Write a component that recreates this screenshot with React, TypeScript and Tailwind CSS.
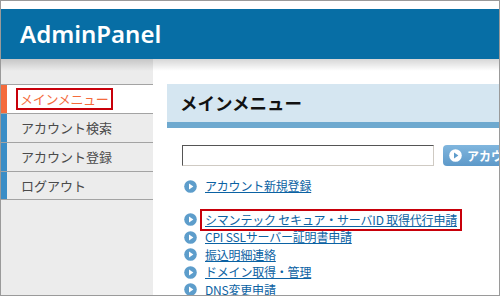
import React from "react";

const jp = { fontFamily: '"Noto Sans CJK JP", "Noto Sans", sans-serif' };

function PlayIcon({ light = false }: { light?: boolean }) {
  return (
    <svg width="13" height="13" viewBox="0 0 13 13" className="shrink-0">
      <circle cx="6.5" cy="6.5" r="6.3" fill={light ? "#ffffff" : "#5d9dcb"} />
      <path d="M5 3.6 L9.4 6.5 L5 9.4 Z" fill={light ? "#5f9ccb" : "#ffffff"} />
    </svg>
  );
}

const sideItems = ["アカウント検索", "アカウント登録", "ログアウト"];

const links = [
  "CPI SSLサーバー証明書申請",
  "振込明細連絡",
  "ドメイン取得・管理",
  "DNS変更申請",
];

export default function App() {
  return (
    <div className="w-[500px] h-[296px] border border-[#9a9a9a] bg-white overflow-hidden flex flex-col" style={jp}>
      <div className="h-[8px] shrink-0" />
      {/* header */}
      <div className="h-[50px] shrink-0 bg-[#076ea5] flex items-center pl-[19px]">
        <span
          className="text-white text-[24px] font-semibold"
          style={{ fontFamily: '"Noto Sans", sans-serif' }}
        >
          AdminPanel
        </span>
      </div>

      <div className="flex flex-1 relative">
        <div className="absolute left-0 right-0 top-0 h-[12px] bg-linear-to-b from-[rgba(0,0,0,0.16)] to-transparent" />

        {/* sidebar */}
        <div className="w-[152px] shrink-0 bg-[#ececec] pt-[25px]">
          <div className="h-[29px] border-t border-[#a3a3a3] bg-white flex items-center">
            <div className="w-[6px] h-full bg-[#f46b3c]" />
            <span className="ml-[9px] border-2 border-[#c8000a] px-[2px] h-[22px] flex items-center text-[13px] tracking-[-0.3px] text-[#f46b3c]">
              メインメニュー
            </span>
          </div>
          {sideItems.map((item, i) => (
            <div
              key={item}
              className={
                "h-[29px] border-t border-[#a3a3a3] flex items-center" +
                (i === sideItems.length - 1 ? " border-b" : "")
              }
            >
              <div className="w-[6px] h-full bg-[#3a8dc6]" />
              <span className="ml-[14px] text-[13px] text-[#4a4a4a]">{item}</span>
            </div>
          ))}
        </div>

        {/* main */}
        <div className="flex-1 pt-[25px] pl-[14px] whitespace-nowrap">
          <div className="h-[44px] bg-[#d5e6f1] border-b-[6px] border-[#6ea9cf] flex items-center pl-[13px]">
            <span className="text-[17.5px] font-bold text-[#111]">メインメニュー</span>
          </div>

          <div className="flex items-center mt-[17px] ml-[15px]">
            <div className="w-[252px] h-[21px] border border-t-[#555] border-l-[#555] border-r-[#cfcac3] border-b-[#cfcac3] bg-white" />
            <div className="ml-[9px] h-[21px] w-[80px] rounded-[4px] bg-linear-to-b from-[#80b6de] to-[#5d99c9] flex items-center pl-[6px] gap-[5px] shrink-0">
              <PlayIcon light />
              <span className="text-white text-[12px] font-bold">アカウント検索</span>
            </div>
          </div>

          <div className="mt-[11px] ml-[17px] text-[12px] tracking-[-0.2px] text-[#0b62a3]">
            <div className="h-[18px] flex items-center gap-[8px]">
              <PlayIcon />
              <a href="#" className="underline">アカウント新規登録</a>
            </div>
            <div className="h-[16px]" />
            <div className="h-[17.5px] flex items-center gap-[8px]">
              <PlayIcon />
              <span className="-ml-[5px] border-2 border-[#c8000a] pl-[3px] pr-[3px] h-[22px] flex items-center">
                <a href="#" className="underline">シマンテック セキュア・サーバID 取得代行申請</a>
              </span>
            </div>
            {links.map((l) => (
              <div key={l} className="h-[17.5px] flex items-center gap-[8px]">
                <PlayIcon />
                <a href="#" className="underline">{l}</a>
              </div>
            ))}
          </div>
        </div>
      </div>
    </div>
  );
}
